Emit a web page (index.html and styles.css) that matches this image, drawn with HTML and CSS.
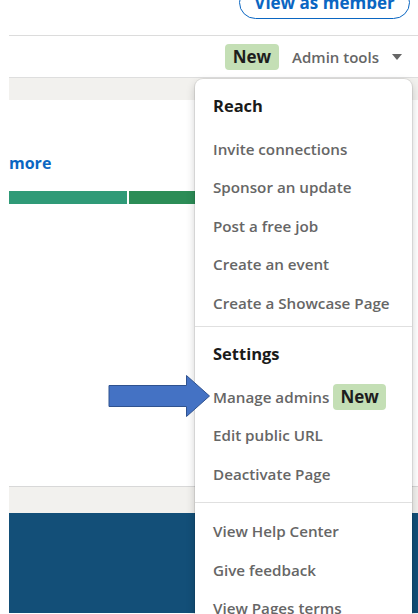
FILE: index.html
```html
<!DOCTYPE html>
<html lang="en">

<head>
    <meta charset="UTF-8" />
    <meta name="viewport" content="width=device-width, initial-scale=1.0" />
    <title>Admin tools</title>
    <link rel="stylesheet" href="styles.css">
</head>

<body>

    <div class="page">
        <div class="top-bar">
            <a href="#" class="member-btn">View as member</a>
        </div>

        <div class="admin-bar">
            <span class="badge">New</span>
            <span class="admin-tools">Admin tools <span class="caret"></span></span>
        </div>

        <div class="band"></div>

        <section class="card">
            <a href="#" class="more">more</a>
            <div class="progress">
                <div class="seg seg-a"></div>
                <div class="seg seg-b"></div>
            </div>
        </section>

        <div class="band band-low"></div>
        <div class="hero"></div>

        <!-- admin tools dropdown -->
        <div class="menu">
            <div class="group reach">
                <h4>Reach</h4>
                <a href="#">Invite connections</a>
                <a href="#">Sponsor an update</a>
                <a href="#">Post a free job</a>
                <a href="#">Create an event</a>
                <a href="#">Create a Showcase Page</a>
            </div>
            <div class="group settings">
                <h4>Settings</h4>
                <a href="#">Manage admins <span class="badge small">New</span></a>
                <a href="#">Edit public URL</a>
                <a href="#">Deactivate Page</a>
            </div>
            <div class="group help">
                <a href="#">View Help Center</a>
                <a href="#">Give feedback</a>
                <a href="#">View Pages terms</a>
            </div>
        </div>

        <svg class="pointer" width="104" height="44" viewBox="0 0 104 44">
            <path d="M1 11.5 H78.5 V1.5 L101.5 22 L78.5 42.5 V32.5 H1 Z" fill="#4472c4" stroke="#2f528f" stroke-width="1" />
        </svg>
    </div>

</body>

</html>
```

FILE: styles.css
```css
* {
    box-sizing: border-box;
    font-family: 'Open Sans', 'Liberation Sans', sans-serif;
}

body {
    margin: 0;
    background-color: white;
    overflow: hidden;
    height: 614px;
}

.page {
    position: relative;
    margin-left: 9px;
    height: 614px;
    background-color: white;
}

.top-bar {
    height: 36px;
    border-bottom: 1px solid #dcdcdc;
    display: flex;
    justify-content: flex-end;
    padding-right: 8px;
}

.member-btn {
    margin-top: -14px;
    height: 33px;
    width: 171px;
    border: 1px solid #0a66c2;
    border-radius: 17px;
    color: #0a66c2;
    font-size: 17px;
    font-weight: 700;
    text-decoration: none;
    display: flex;
    align-items: center;
    justify-content: center;
}

.admin-bar {
    height: 42px;
    border-bottom: 1px solid #dedede;
    display: flex;
    align-items: center;
    justify-content: flex-end;
    padding-right: 16px;
    gap: 13px;
}

.badge {
    background-color: #c4dfb5;
    color: #1d1d1d;
    font-weight: 700;
    font-size: 17px;
    border-radius: 4px;
    padding: 0 8px;
    height: 26px;
    line-height: 26px;
    display: inline-block;
}

.admin-tools {
    color: #666;
    font-size: 15px;
    font-weight: 600;
    display: flex;
    align-items: center;
}

.caret {
    margin-left: 13px;
    border-left: 5.5px solid transparent;
    border-right: 5.5px solid transparent;
    border-top: 6px solid #666;
}

.band {
    height: 22px;
    background-color: #f2f1ee;
}

.card {
    height: 387px;
    border-bottom: 1px solid #d8d8d8;
    padding-top: 52px;
}

.more {
    color: #0a66c2;
    font-weight: 700;
    font-size: 16px;
    text-decoration: none;
}

.progress {
    margin-top: 17px;
    display: flex;
    gap: 2px;
    height: 13px;
    width: 190px;
}

.seg-a {
    width: 118px;
    background-color: #2f9a77;
}

.seg-b {
    flex: 1;
    background-color: #2c8d57;
}

.band-low {
    height: 26px;
}

.hero {
    height: 100px;
    background-color: #134f78;
}

.menu {
    position: absolute;
    left: 186px;
    top: 79px;
    width: 217px;
    background-color: white;
    border-radius: 8px 8px 0 0;
    box-shadow: 0 0 0 1px rgba(0, 0, 0, 0.08), 0 4px 10px rgba(0, 0, 0, 0.2);
}

.group {
    padding-top: 6px;
    border-bottom: 1px solid #e0e0e0;
}

.group.reach {
    padding-bottom: 4px;
}

.group.settings {
    padding-bottom: 9px;
}

.group.help {
    border-bottom: none;
    padding-top: 9px;
}

.group h4 {
    margin: 0;
    padding: 10px 18px 0;
    height: 44.5px;
    line-height: 22px;
    font-size: 16.5px;
    font-weight: 700;
    color: #1a1a1a;
}

.group a {
    display: flex;
    align-items: center;
    gap: 4px;
    height: 38.5px;
    padding: 0 18px;
    color: #666;
    font-size: 15.2px;
    font-weight: 600;
    text-decoration: none;
    white-space: nowrap;
}

.badge.small {
    height: 26px;
    line-height: 26px;
    padding: 0 7px;
}

.pointer {
    position: absolute;
    left: 99px;
    top: 374px;
}
```
